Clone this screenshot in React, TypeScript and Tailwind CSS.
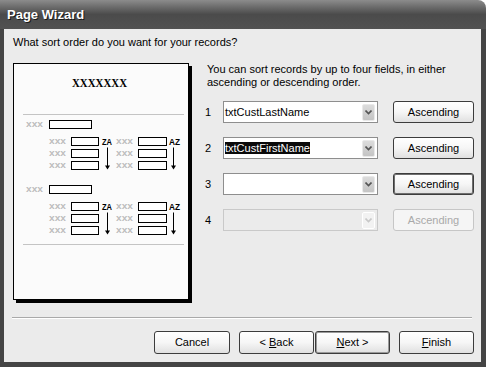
import React from 'react';

const fields = [
  { n: '1', value: 'txtCustLastName', selected: false, disabled: false, focused: false },
  { n: '2', value: 'txtCustFirstName', selected: true, disabled: false, focused: false },
  { n: '3', value: '', selected: false, disabled: false, focused: true },
  { n: '4', value: '', selected: false, disabled: true, focused: false },
];

function Xs({ x, y }: { x: number; y: number }) {
  return (
    <text
      x={x}
      y={y}
      fontSize="9"
      fontWeight="bold"
      fill="#bdbdbd"
      textLength="17"
      lengthAdjust="spacingAndGlyphs"
      fontFamily="Liberation Sans, sans-serif"
    >
      xxx
    </text>
  );
}

function Arrow({ x, y1, y2 }: { x: number; y1: number; y2: number }) {
  return (
    <g>
      <line x1={x} y1={y1} x2={x} y2={y2 - 2} stroke="#000" strokeWidth="1" />
      <polygon points={`${x - 2.5},${y2 - 4} ${x + 2.5},${y2 - 4} ${x},${y2}`} fill="#000" />
    </g>
  );
}

function SortGroup({ top }: { top: number }) {
  const rows = [top + 17, top + 29, top + 41];
  return (
    <g>
      <Xs x={26} y={top + 6.5} />
      <rect x={49.5} y={top} width={42} height={8} fill="#fff" stroke="#000" />
      {rows.map((r, i) => (
        <g key={i}>
          <Xs x={49} y={r + 6.5} />
          <rect x={71.5} y={r} width={27} height={8} fill="#fff" stroke="#000" />
          <Xs x={116} y={r + 6.5} />
          <rect x={138.5} y={r} width={28} height={8} fill="#fff" stroke="#000" />
        </g>
      ))}
      <text x={102} y={rows[0] + 7.5} fontSize="9" fontWeight="bold" textLength="10" lengthAdjust="spacingAndGlyphs" fontFamily="Liberation Sans, sans-serif">ZA</text>
      <text x={169} y={rows[0] + 7.5} fontSize="9" fontWeight="bold" textLength="11" lengthAdjust="spacingAndGlyphs" fontFamily="Liberation Sans, sans-serif">AZ</text>
      <Arrow x={107.5} y1={rows[0] + 10} y2={rows[2] + 8} />
      <Arrow x={173.5} y1={rows[0] + 10} y2={rows[2] + 8} />
    </g>
  );
}

function ReportPreview() {
  return (
    <div className="ml-[9px] w-[176px] h-[237px] shrink-0 border border-black bg-[#fbfbfb] shadow-[3px_3px_0_#000]">
      <svg width="174" height="235" viewBox="14 64 174 235" className="block">
        <text
          x={72}
          y={87}
          fontSize="13"
          fontWeight="bold"
          textLength="55"
          lengthAdjust="spacingAndGlyphs"
          fontFamily="Liberation Serif, serif"
        >
          XXXXXXX
        </text>
        <line x1={23} y1={114.5} x2={184} y2={114.5} stroke="#c4c4c4" />
        <SortGroup top={120.5} />
        <SortGroup top={185.5} />
        <line x1={23} y1={244.5} x2={184} y2={244.5} stroke="#c4c4c4" />
      </svg>
    </div>
  );
}

function Chevron({ color }: { color: string }) {
  return (
    <svg width="7" height="5" viewBox="0 0 7 5">
      <path d="M0.5 0.5 L3.5 3.5 L6.5 0.5" fill="none" stroke={color} strokeWidth="1.6" />
    </svg>
  );
}

function WinButton({ children, disabled, strong, className = '' }: { children: React.ReactNode; disabled?: boolean; strong?: boolean; className?: string }) {
  return (
    <div
      className={`flex items-center justify-center rounded-[3px] border text-[11px] ${
        disabled
          ? 'border-[#c6c6c6] bg-[#f5f5f5] text-[#a9a9a9]'
          : 'border-[#3c3c3c] bg-gradient-to-b from-white via-[#f6f6f6] to-[#e0e0e0] text-black'
      } ${strong ? 'shadow-[inset_0_0_0_1px_#9a9a9a]' : ''} ${className}`}
    >
      {children}
    </div>
  );
}

function FieldRow({ f }: { f: (typeof fields)[number] }) {
  return (
    <div className="flex items-center h-[22px]">
      <span className="w-[19px] pl-[1px] text-[11px]">{f.n}</span>
      <div
        className={`relative w-[155px] h-[22px] border ${
          f.disabled ? 'border-[#c9c9c9] bg-[#ebebeb]' : 'border-[#8e8e8e] bg-white'
        }`}
      >
        <div className="pl-[1px] pt-[4px] text-[11px] leading-[12px]">
          {f.value && <span className={f.selected ? 'bg-[#0a0a0a] text-white' : ''}>{f.value}</span>}
        </div>
        <div
          className={`absolute right-[2px] top-[2px] w-[13px] h-[17px] flex items-center justify-center rounded-[2px] ${
            f.disabled ? 'bg-[#f2f2f2] border border-white' : 'bg-gradient-to-b from-[#dcdcdc] to-[#c4c4c4] border border-[#e9e9e9]'
          }`}
        >
          <Chevron color={f.disabled ? '#c8c8c8' : '#555'} />
        </div>
      </div>
      <WinButton
        disabled={f.disabled}
        className={`ml-[15px] w-[81px] h-[22px] ${f.focused ? 'border-[#1e1e1e] shadow-[inset_0_0_0_1px_#6e6e6e]' : ''}`}
      >
        Ascending
      </WinButton>
    </div>
  );
}

export default function App() {
  return (
    <div className="w-[486px] h-[367px] bg-white font-['Liberation_Sans',Arial,sans-serif] text-black">
      <div className="w-full h-full flex flex-col rounded-tr-[8px] overflow-hidden">
        <div className="h-[29px] shrink-0 flex items-center pl-[7px] bg-gradient-to-b from-[#8c8c8c] via-[#4b4b4b] to-[#525252]">
          <span className="text-[13px] font-bold text-white [text-shadow:1px_1px_0_#1a1a1a]">Page Wizard</span>
        </div>
        <div className="flex-1 flex flex-col bg-[#ebebeb] border-l-4 border-r-[5px] border-b-[5px] border-[#444]">
          <p className="mt-[7px] ml-[9px] text-[11px] leading-[13px]">What sort order do you want for your records?</p>
          <div className="flex mt-[14px]">
            <ReportPreview />
            <div className="ml-[15px] flex flex-col">
              <p className="pl-[3px] text-[11px] leading-[13px]">
                You can sort records by up to four fields, in either
                <br />
                ascending or descending order.
              </p>
              <div className="mt-[12px] flex flex-col gap-[14px]">
                {fields.map((f) => (
                  <FieldRow key={f.n} f={f} />
                ))}
              </div>
            </div>
          </div>
          <div className="mt-auto ml-[8px] w-[460px] border-t border-[#a9a9a9] border-b border-b-white" />
          <div className="flex mt-[12px] mb-[8px] ml-[150px]">
            <WinButton className="w-[76px] h-[23px]">Cancel</WinButton>
            <WinButton className="ml-[9px] w-[75px] h-[23px]">
              &lt; <span className="underline ml-[3px]">B</span>ack
            </WinButton>
            <WinButton strong className="ml-[1px] w-[75px] h-[23px]">
              <span className="underline">N</span>ext &gt;
            </WinButton>
            <WinButton className="ml-[9px] w-[75px] h-[23px]">
              <span className="underline">F</span>inish
            </WinButton>
          </div>
        </div>
      </div>
    </div>
  );
}
